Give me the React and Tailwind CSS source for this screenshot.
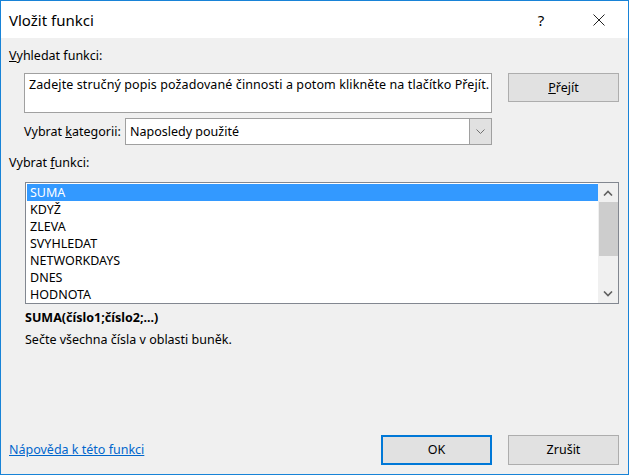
import React from 'react';

const functions = ['SUMA', 'KDYŽ', 'ZLEVA', 'SVYHLEDAT', 'NETWORKDAYS', 'DNES', 'HODNOTA'];

const Chevron = ({ up, className }) => (
  <svg className={className} width="10" height="6" viewBox="0 0 10 6" fill="none">
    <path
      d={up ? 'M1 5.5 L5 1.5 L9 5.5' : 'M1 0.5 L5 4.5 L9 0.5'}
      stroke="currentColor"
      strokeWidth="1.6"
    />
  </svg>
);

const Btn = ({ children, primary }) => (
  <button
    className={
      'w-[111px] h-[30px] bg-[#e1e1e1] text-black ' +
      (primary ? 'border-2 border-[#0078d7]' : 'border border-[#adadad]')
    }
  >
    {children}
  </button>
);

const App = () => {
  return (
    <div className="w-[629px] h-[475px] border border-[#1883d7] bg-[#f0f0f0] flex flex-col font-['Noto_Sans',sans-serif] text-[12.5px] text-black leading-[16px]">
      {/* Title bar */}
      <div className="h-[37px] bg-white flex items-center pl-2 shrink-0">
        <span className="text-[15px] flex-1">Vložit funkci</span>
        <span className="text-[15px] w-[30px] text-center mr-[20px]">?</span>
        <div className="w-[46px] flex justify-center mr-[6px]">
          <svg width="12" height="12" viewBox="0 0 12 12">
            <path d="M0.5 0.5 L11.5 11.5 M11.5 0.5 L0.5 11.5" stroke="#222" strokeWidth="1" />
          </svg>
        </div>
      </div>

      {/* Body */}
      <div className="flex-1 flex flex-col pl-2 pr-[9px]">
        <div className="mt-[10px]">
          <span className="underline">V</span>yhledat funkci:
        </div>

        <div className="mt-[9px] pl-[15px] flex items-start">
          <div className="w-[468px] h-[40px] bg-white border border-[#a0a0a0] px-[4px] py-[3px] whitespace-nowrap overflow-hidden tracking-[0.1px]">
            Zadejte stručný popis požadované činnosti a potom klikněte na tlačítko Přejít.
          </div>
          <button className="ml-auto w-[111px] h-[29px] bg-[#e1e1e1] border border-[#adadad]">
            <span className="underline">P</span>řejít
          </button>
        </div>

        <div className="mt-[5px] pl-[15px] flex items-center">
          <span className="w-[101px]">
            Vybrat <span className="underline">k</span>ategorii:
          </span>
          <div className="w-[367px] h-[27px] bg-white border border-[#a0a0a0] flex items-stretch">
            <span className="flex-1 pl-[4px] flex items-center">Naposledy použité</span>
            <div className="w-[22px] bg-[#e1e1e1] border-l border-[#a0a0a0] flex items-center justify-center text-[#707070]">
              <svg width="9" height="5" viewBox="0 0 9 5" fill="none">
                <path d="M0.5 0.5 L4.5 4.5 L8.5 0.5" stroke="currentColor" strokeWidth="1" />
              </svg>
            </div>
          </div>
        </div>

        <div className="mt-[10px]">
          Vybrat <span className="underline">f</span>unkci:
        </div>

        <div className="mt-[11px] ml-[16px] h-[122px] bg-white border border-[#828790] flex">
          <div className="flex-1 pt-[1px] pl-[1px]">
            {functions.map((f, i) => (
              <div
                key={f}
                className={
                  'h-[17px] pl-[3px] leading-[17px] ' +
                  (i === 0 ? 'bg-[#3399ff] text-white' : '')
                }
              >
                {f}
              </div>
            ))}
          </div>
          <div className="w-[20px] bg-[#f0f0f0] flex flex-col items-center">
            <div className="h-[19px] flex items-center justify-center text-[#606060]">
              <Chevron up />
            </div>
            <div className="w-[19px] h-[54px] bg-[#cdcdcd]" />
            <div className="flex-1" />
            <div className="h-[19px] flex items-center justify-center text-[#606060]">
              <Chevron />
            </div>
          </div>
        </div>

        <div className="mt-[6px] ml-[16px] font-bold">SUMA(číslo1;číslo2;...)</div>
        <div className="mt-[6px] ml-[16px]">Sečte všechna čísla v oblasti buněk.</div>

        <div className="mt-auto mb-[9px] flex items-center">
          <a className="text-[#0066cc] underline flex-1">Nápověda k této funkci</a>
          <Btn primary>OK</Btn>
          <div className="w-[16px]" />
          <Btn>Zrušit</Btn>
        </div>
      </div>
    </div>
  );
};

export default App;
